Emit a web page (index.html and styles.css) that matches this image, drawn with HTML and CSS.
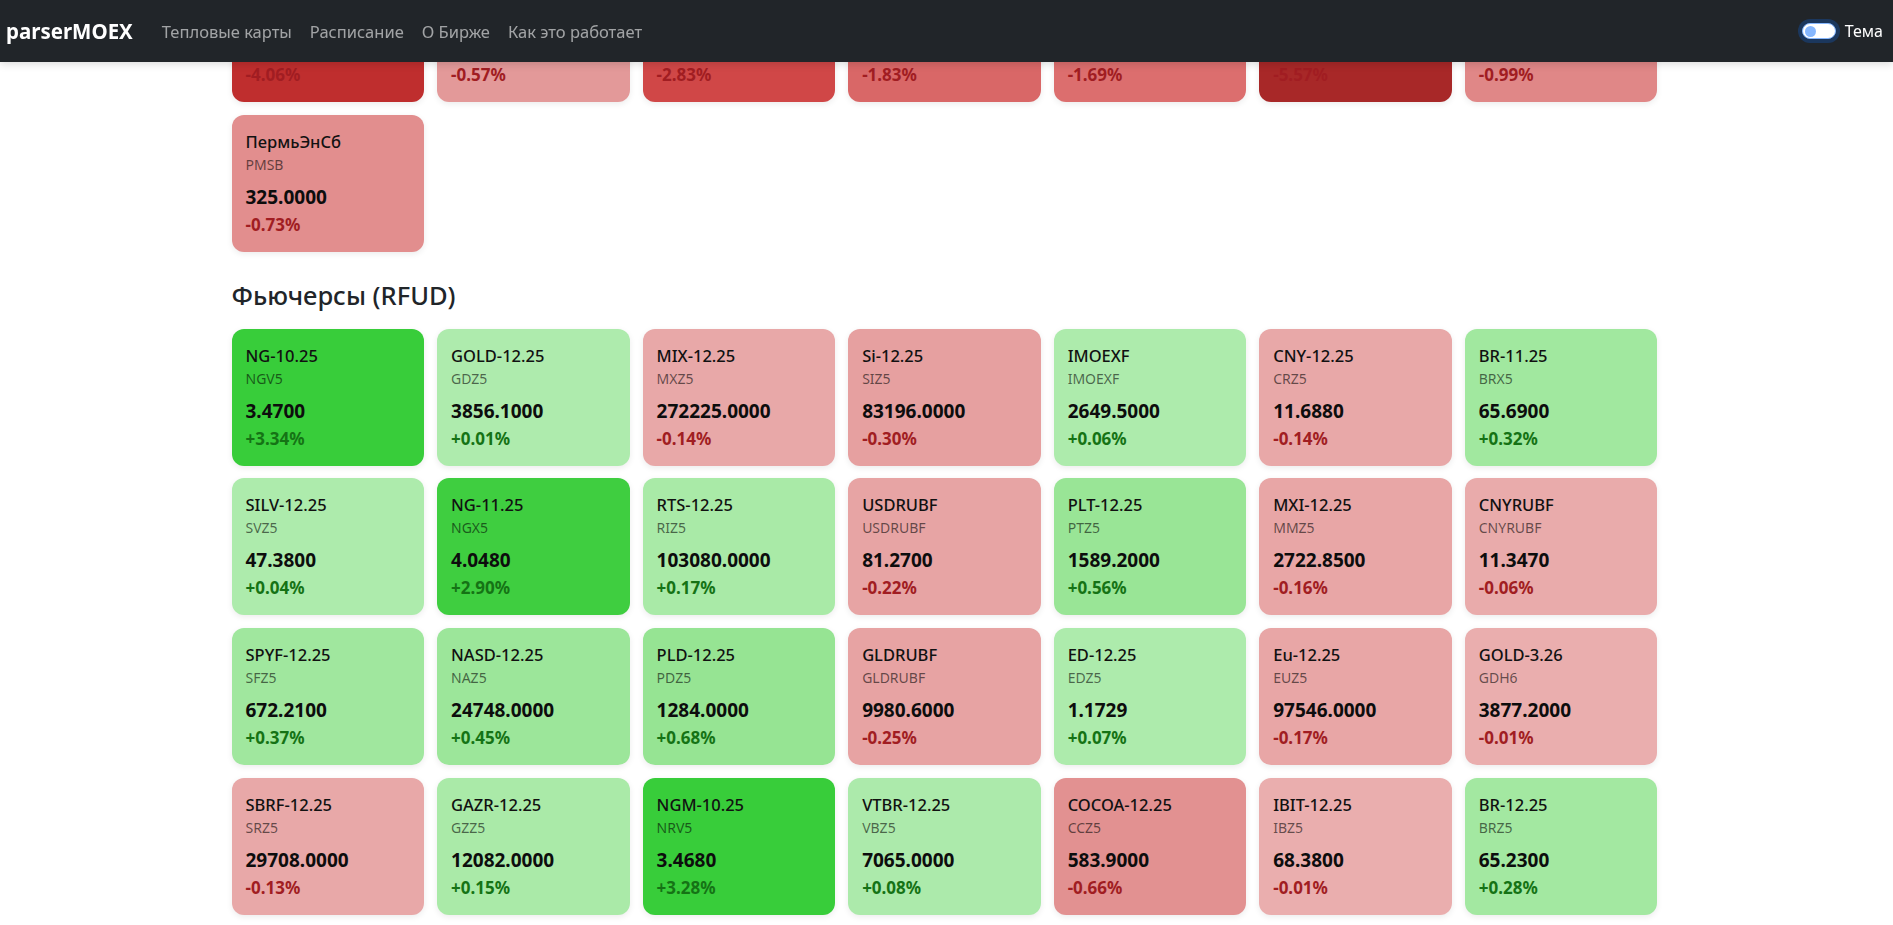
FILE: index.html
```html
<!DOCTYPE html>
<html lang="ru">
<head>
<meta charset="utf-8">
<title>parserMOEX</title>
<link rel="stylesheet" href="styles.css">
</head>
<body>
<nav class="navbar">
  <a class="brand" href="#">parserMOEX</a>
  <ul class="nav-links">
    <li><a href="#">Тепловые карты</a></li>
    <li><a href="#">Расписание</a></li>
    <li><a href="#">О Бирже</a></li>
    <li><a href="#">Как это работает</a></li>
  </ul>
  <label class="theme">
    <span class="switch"><span class="knob"></span></span>
    <span class="theme-label">Тема</span>
  </label>
</nav>

<main class="page">
  <section class="board board-scrolled">
    <div class="grid">
      <div class="card" style="background:#bf2e2e"><div class="name">&nbsp;</div><div class="ticker">&nbsp;</div><div class="price">&nbsp;</div><div class="change neg">-4.06%</div></div>
      <div class="card" style="background:#e39999"><div class="name">&nbsp;</div><div class="ticker">&nbsp;</div><div class="price">&nbsp;</div><div class="change neg">-0.57%</div></div>
      <div class="card" style="background:#d04747"><div class="name">&nbsp;</div><div class="ticker">&nbsp;</div><div class="price">&nbsp;</div><div class="change neg">-2.83%</div></div>
      <div class="card" style="background:#d96767"><div class="name">&nbsp;</div><div class="ticker">&nbsp;</div><div class="price">&nbsp;</div><div class="change neg">-1.83%</div></div>
      <div class="card" style="background:#dc6e6e"><div class="name">&nbsp;</div><div class="ticker">&nbsp;</div><div class="price">&nbsp;</div><div class="change neg">-1.69%</div></div>
      <div class="card" style="background:#a82828"><div class="name">&nbsp;</div><div class="ticker">&nbsp;</div><div class="price">&nbsp;</div><div class="change neg">-5.57%</div></div>
      <div class="card" style="background:#e08787"><div class="name">&nbsp;</div><div class="ticker">&nbsp;</div><div class="price">&nbsp;</div><div class="change neg">-0.99%</div></div>
      <div class="card" style="background:#e28e8e"><div class="name">ПермьЭнСб</div><div class="ticker">PMSB</div><div class="price">325.0000</div><div class="change neg">-0.73%</div></div>
    </div>
  </section>

  <section class="board">
    <h4 class="board-title">Фьючерсы (RFUD)</h4>
    <div class="grid">
      <div class="card" style="background:#38cd3a"><div class="name">NG-10.25</div><div class="ticker">NGV5</div><div class="price">3.4700</div><div class="change pos">+3.34%</div></div>
      <div class="card" style="background:#aeebad"><div class="name">GOLD-12.25</div><div class="ticker">GDZ5</div><div class="price">3856.1000</div><div class="change pos">+0.01%</div></div>
      <div class="card" style="background:#e8a8a8"><div class="name">MIX-12.25</div><div class="ticker">MXZ5</div><div class="price">272225.0000</div><div class="change neg">-0.14%</div></div>
      <div class="card" style="background:#e6a0a0"><div class="name">Si-12.25</div><div class="ticker">SIZ5</div><div class="price">83196.0000</div><div class="change neg">-0.30%</div></div>
      <div class="card" style="background:#adebac"><div class="name">IMOEXF</div><div class="ticker">IMOEXF</div><div class="price">2649.5000</div><div class="change pos">+0.06%</div></div>
      <div class="card" style="background:#e8a8a8"><div class="name">CNY-12.25</div><div class="ticker">CRZ5</div><div class="price">11.6880</div><div class="change neg">-0.14%</div></div>
      <div class="card" style="background:#a1e89f"><div class="name">BR-11.25</div><div class="ticker">BRX5</div><div class="price">65.6900</div><div class="change pos">+0.32%</div></div>

      <div class="card" style="background:#adebac"><div class="name">SILV-12.25</div><div class="ticker">SVZ5</div><div class="price">47.3800</div><div class="change pos">+0.04%</div></div>
      <div class="card" style="background:#3fce40"><div class="name">NG-11.25</div><div class="ticker">NGX5</div><div class="price">4.0480</div><div class="change pos">+2.90%</div></div>
      <div class="card" style="background:#a9eaa7"><div class="name">RTS-12.25</div><div class="ticker">RIZ5</div><div class="price">103080.0000</div><div class="change pos">+0.17%</div></div>
      <div class="card" style="background:#e7a4a4"><div class="name">USDRUBF</div><div class="ticker">USDRUBF</div><div class="price">81.2700</div><div class="change neg">-0.22%</div></div>
      <div class="card" style="background:#99e596"><div class="name">PLT-12.25</div><div class="ticker">PTZ5</div><div class="price">1589.2000</div><div class="change pos">+0.56%</div></div>
      <div class="card" style="background:#e8a6a6"><div class="name">MXI-12.25</div><div class="ticker">MMZ5</div><div class="price">2722.8500</div><div class="change neg">-0.16%</div></div>
      <div class="card" style="background:#e9abab"><div class="name">CNYRUBF</div><div class="ticker">CNYRUBF</div><div class="price">11.3470</div><div class="change neg">-0.06%</div></div>

      <div class="card" style="background:#a0e79e"><div class="name">SPYF-12.25</div><div class="ticker">SFZ5</div><div class="price">672.2100</div><div class="change pos">+0.37%</div></div>
      <div class="card" style="background:#9ce69a"><div class="name">NASD-12.25</div><div class="ticker">NAZ5</div><div class="price">24748.0000</div><div class="change pos">+0.45%</div></div>
      <div class="card" style="background:#96e493"><div class="name">PLD-12.25</div><div class="ticker">PDZ5</div><div class="price">1284.0000</div><div class="change pos">+0.68%</div></div>
      <div class="card" style="background:#e7a3a3"><div class="name">GLDRUBF</div><div class="ticker">GLDRUBF</div><div class="price">9980.6000</div><div class="change neg">-0.25%</div></div>
      <div class="card" style="background:#adebac"><div class="name">ED-12.25</div><div class="ticker">EDZ5</div><div class="price">1.1729</div><div class="change pos">+0.07%</div></div>
      <div class="card" style="background:#e8a6a6"><div class="name">Eu-12.25</div><div class="ticker">EUZ5</div><div class="price">97546.0000</div><div class="change neg">-0.17%</div></div>
      <div class="card" style="background:#eaaeae"><div class="name">GOLD-3.26</div><div class="ticker">GDH6</div><div class="price">3877.2000</div><div class="change neg">-0.01%</div></div>

      <div class="card" style="background:#e8a8a8"><div class="name">SBRF-12.25</div><div class="ticker">SRZ5</div><div class="price">29708.0000</div><div class="change neg">-0.13%</div></div>
      <div class="card" style="background:#aaeaa8"><div class="name">GAZR-12.25</div><div class="ticker">GZZ5</div><div class="price">12082.0000</div><div class="change pos">+0.15%</div></div>
      <div class="card" style="background:#38cd3a"><div class="name">NGM-10.25</div><div class="ticker">NRV5</div><div class="price">3.4680</div><div class="change pos">+3.28%</div></div>
      <div class="card" style="background:#aceaab"><div class="name">VTBR-12.25</div><div class="ticker">VBZ5</div><div class="price">7065.0000</div><div class="change pos">+0.08%</div></div>
      <div class="card" style="background:#e29191"><div class="name">COCOA-12.25</div><div class="ticker">CCZ5</div><div class="price">583.9000</div><div class="change neg">-0.66%</div></div>
      <div class="card" style="background:#eaaeae"><div class="name">IBIT-12.25</div><div class="ticker">IBZ5</div><div class="price">68.3800</div><div class="change neg">-0.01%</div></div>
      <div class="card" style="background:#a3e8a1"><div class="name">BR-12.25</div><div class="ticker">BRZ5</div><div class="price">65.2300</div><div class="change pos">+0.28%</div></div>
    </div>
  </section>
</main>
</body>
</html>
```

FILE: styles.css
```css
* { box-sizing: border-box; }

html, body {
  margin: 0;
  padding: 0;
  background: #ffffff;
  color: #212529;
  font-family: "Noto Sans", "Open Sans", "Liberation Sans", sans-serif;
  font-size: 16px;
}

.navbar {
  position: fixed;
  top: 0;
  left: 0;
  right: 0;
  z-index: 10;
  height: 62px;
  display: flex;
  align-items: center;
  padding: 0 10px 0 6px;
  background: #212529;
  box-shadow: 0 2px 8px rgba(0, 0, 0, 0.15);
}

.brand {
  color: #ffffff;
  font-size: 20.5px;
  font-weight: 700;
  text-decoration: none;
  margin-right: 20px;
}

.nav-links {
  list-style: none;
  display: flex;
  margin: 0;
  padding: 0;
}

.nav-links a {
  display: block;
  padding: 8px 9px;
  color: rgba(255, 255, 255, 0.58);
  text-decoration: none;
  font-size: 16.5px;
}

.theme {
  margin-left: auto;
  display: flex;
  align-items: center;
  gap: 9px;
}

.switch {
  width: 34px;
  height: 16px;
  border-radius: 8px;
  background: #ffffff;
  border: 1px solid #86b7fe;
  box-shadow: 0 0 0 4px rgba(13, 110, 253, 0.25);
  display: flex;
  align-items: center;
  padding: 0 2px;
}

.knob {
  width: 11px;
  height: 11px;
  border-radius: 50%;
  background: #86b7fe;
}

.theme-label {
  color: #ffffff;
  font-size: 16px;
}

.page {
  width: 1426px;
  margin: -35px 0 40px calc(50% - 715px);
}

.grid {
  display: grid;
  grid-template-columns: repeat(7, 1fr);
  gap: 12.8px;
}

.board-title {
  margin: 29px 0 19px;
  font-size: 25.5px;
  font-weight: 500;
  line-height: 28.8px;
  color: #212529;
}

.card {
  border-radius: 12px;
  padding: 15px 14px 15px;
  box-shadow: 0 2px 6px rgba(0, 0, 0, 0.08);
  color: #111;
}

.name {
  font-size: 16.5px;
  line-height: 24px;
  font-weight: 500;
  color: #111;
}

.ticker {
  margin-top: 1px;
  font-size: 14px;
  line-height: 20px;
  color: rgba(0, 0, 0, 0.58);
}

.price {
  margin-top: 9px;
  font-size: 19px;
  line-height: 27px;
  font-weight: 700;
  color: #0d0d0d;
}

.change {
  margin-top: 2px;
  font-size: 17px;
  line-height: 24px;
  font-weight: 700;
}

.change.neg { color: #a11d22; }
.change.pos { color: #157315; }
```
